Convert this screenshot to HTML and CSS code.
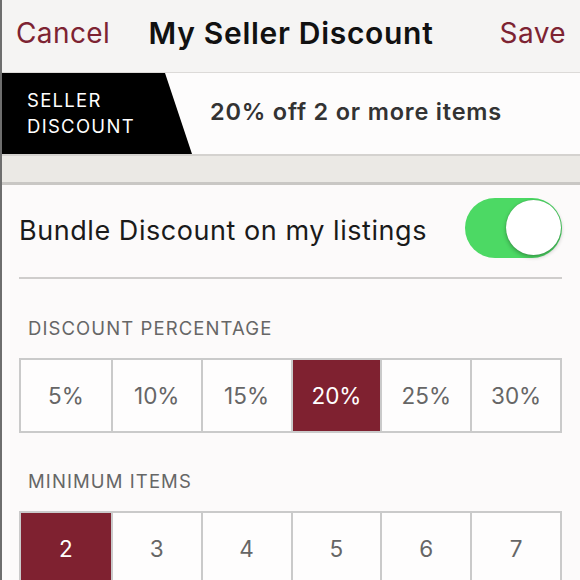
FILE: index.html
```html
<!DOCTYPE html>
<html>
<head>
<meta charset="utf-8">
<link rel="stylesheet" href="styles.css">
</head>
<body>
<div class="screen">
  <header class="nav">
    <span class="nav-btn">Cancel</span>
    <span class="nav-title">My Seller Discount</span>
    <span class="nav-btn right">Save</span>
  </header>
  <div class="banner">
    <div class="tag">SELLER<br>DISCOUNT</div>
    <div class="summary">20% off 2 or more items</div>
  </div>
  <div class="band"></div>
  <main class="content">
    <div class="toggle-row">
      <span class="toggle-label">Bundle Discount on my listings</span>
      <span class="switch"><span class="knob"></span></span>
    </div>
    <div class="divider"></div>
    <div class="section-label first">DISCOUNT PERCENTAGE</div>
    <div class="segments">
      <div class="seg">5%</div>
      <div class="seg">10%</div>
      <div class="seg">15%</div>
      <div class="seg active">20%</div>
      <div class="seg">25%</div>
      <div class="seg">30%</div>
    </div>
    <div class="section-label">MINIMUM ITEMS</div>
    <div class="segments">
      <div class="seg active">2</div>
      <div class="seg">3</div>
      <div class="seg">4</div>
      <div class="seg">5</div>
      <div class="seg">6</div>
      <div class="seg">7</div>
    </div>
  </main>
</div>
</body>
</html>
```
FILE: styles.css
```css
* { box-sizing: border-box; }
html, body { margin: 0; padding: 0; }
body {
  width: 580px;
  height: 580px;
  overflow: hidden;
  font-family: Inter, "Noto Sans", sans-serif;
  background: #fcfafa;
}
.screen {
  height: 580px;
  border-left: 2px solid #6e6e6e;
  background: #fcfafa;
}
.nav {
  height: 73px;
  display: grid;
  grid-template-columns: 1fr auto 1fr;
  align-items: center;
  padding: 0 14px 7px 14px;
  background: #f5f4f3;
  border-bottom: 1px solid #dcdad8;
}
.nav-btn {
  color: #7d2332;
  font-size: 28px;
  font-weight: 400;
  letter-spacing: 0.4px;
}
.nav-btn.right { justify-self: end; }
.nav-title {
  color: #111;
  font-size: 30px;
  font-weight: 600;
  letter-spacing: 0.7px;
}
.banner {
  height: 81px;
  display: flex;
  align-items: center;
  position: relative;
  background: #fdfcfc;
}
.tag {
  align-self: stretch;
  width: 190px;
  background: #000;
  clip-path: polygon(0 0, 163px 0, 190px 100%, 0 100%);
  color: #fff;
  font-size: 18.5px;
  line-height: 26px;
  letter-spacing: 1.3px;
  padding: 14px 0 0 25px;
}
.summary {
  margin-left: 18px;
  margin-bottom: 4px;
  color: #333;
  font-size: 23.5px;
  font-weight: 600;
  letter-spacing: 0.8px;
}
.band {
  height: 31px;
  background: #ebe9e5;
  border-top: 2px solid #d4d2cf;
  border-bottom: 3px solid #c9c7c4;
}
.content {
  padding: 0 18px 0 17px;
}
.toggle-row {
  height: 92px;
  display: flex;
  align-items: center;
  justify-content: space-between;
}
.toggle-label {
  font-size: 27px;
  color: #1a1a1a;
  letter-spacing: 0.55px;
  margin-bottom: 2px;
}
.switch {
  width: 97px;
  height: 60px;
  border-radius: 30px;
  background: #4cd964;
  position: relative;
  margin-top: -7px;
}
.knob {
  position: absolute;
  right: 1px;
  top: 2px;
  width: 55px;
  height: 55px;
  border-radius: 50%;
  background: #fff;
  box-shadow: 0 2px 4px rgba(0,0,0,0.3), 0 0 1px rgba(0,0,0,0.25);
}
.divider {
  height: 2px;
  background: #cfcdcc;
}
.section-label {
  color: #666;
  font-size: 18.5px;
  letter-spacing: 1.1px;
  margin: 37px 0 0 9px;
  line-height: 22px;
}
.section-label.first { margin-top: 38px; }
.segments {
  display: grid;
  grid-template-columns: repeat(6, 1fr);
  margin-top: 19px;
  border: 2px solid #cacaca;
  height: 75px;
}
.seg {
  display: flex;
  align-items: center;
  justify-content: center;
  font-size: 22.5px;
  color: #666;
  border-left: 2px solid #cacaca;
  background: #fefdfd;
}
.seg:first-child { border-left: none; }
.seg.active {
  background: #7f2130;
  color: #fff;
}
```
